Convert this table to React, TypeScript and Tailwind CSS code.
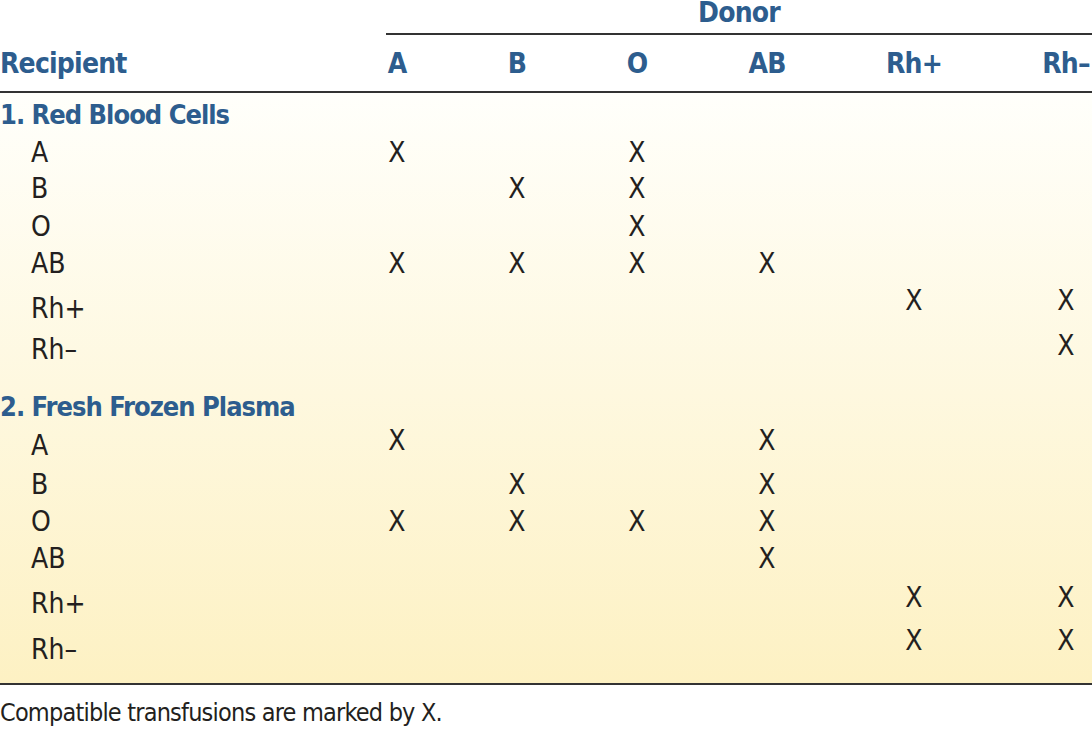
import React from 'react'

type Row = {
  label: string
  marks: number[]
  h: string
  lp: string
  xp: string
}

const cols = ['A', 'B', 'O', 'AB', 'Rh+', 'Rh–']

// row heights and padding picked to line labels / marks up with the printed table
const redCells: Row[] = [
  { label: 'A', marks: [1, 0, 1, 0, 0, 0], h: 'h-[37px]', lp: 'pt-[7px]', xp: 'pt-[7px]' },
  { label: 'B', marks: [0, 1, 1, 0, 0, 0], h: 'h-[37px]', lp: 'pt-[6px]', xp: 'pt-[6px]' },
  { label: 'O', marks: [0, 0, 1, 0, 0, 0], h: 'h-[37px]', lp: 'pt-[7px]', xp: 'pt-[7px]' },
  { label: 'AB', marks: [1, 1, 1, 1, 0, 0], h: 'h-[37px]', lp: 'pt-[7px]', xp: 'pt-[7px]' },
  { label: 'Rh+', marks: [0, 0, 0, 0, 1, 1], h: 'h-[45px]', lp: 'pt-[15px]', xp: 'pt-[7px]' },
  { label: 'Rh–', marks: [0, 0, 0, 0, 0, 1], h: 'h-[45px]', lp: 'pt-[11px]', xp: 'pt-[7px]' },
]

const plasma: Row[] = [
  { label: 'A', marks: [1, 0, 0, 1, 0, 0], h: 'h-[40px]', lp: 'pt-[9px]', xp: 'pt-[4px]' },
  { label: 'B', marks: [0, 1, 0, 1, 0, 0], h: 'h-[38px]', lp: 'pt-[8px]', xp: 'pt-[8px]' },
  { label: 'O', marks: [1, 1, 1, 1, 0, 0], h: 'h-[37px]', lp: 'pt-[7px]', xp: 'pt-[7px]' },
  { label: 'AB', marks: [0, 0, 0, 1, 0, 0], h: 'h-[38px]', lp: 'pt-[7px]', xp: 'pt-[7px]' },
  { label: 'Rh+', marks: [0, 0, 0, 0, 1, 1], h: 'h-[42px]', lp: 'pt-[14px]', xp: 'pt-[8px]' },
  { label: 'Rh–', marks: [0, 0, 0, 0, 1, 1], h: 'h-[63px]', lp: 'pt-[18px]', xp: 'pt-[9px]' },
]

const grid = 'grid grid-cols-[337px_120px_120px_120px_140px_154px_101px]'

const TableRow: React.FC<{ row: Row }> = ({ row }) => (
  <div className={`${grid} ${row.h} items-start text-[28px] leading-[24px]`}>
    <div className={`pl-[31px] ${row.lp}`}>{row.label}</div>
    {row.marks.map((m, i) => (
      <div key={i} className={`${row.xp} text-center ${i === 5 ? 'pl-[49px]' : ''}`}>
        {m ? 'X' : ''}
      </div>
    ))}
  </div>
)

const Section: React.FC<{ title: string; pad: string; h: string }> = ({ title, pad, h }) => (
  <div className={`${h} ${pad} text-[27px] leading-[32px] font-bold tracking-[-1px] text-[#2d5d8e]`}>
    {title}
  </div>
)

export default function App() {
  return (
    <div className="w-[1092px] h-[730px] bg-white text-[#231f20] font-['DejaVu_Sans_Condensed','DejaVu_Sans',sans-serif]">
      {/* Donor spanner */}
      <div className="ml-[386px] h-[35px] pt-[1px] border-b-2 border-[#333] text-center text-[28px] leading-[24px] font-bold tracking-[-0.8px] text-[#2d5d8e]">
        Donor
      </div>

      {/* Column heads */}
      <div className={`${grid} h-[58px] pt-[14px] border-b-2 border-[#333] text-[28px] leading-[30px] font-bold tracking-[-0.8px] text-[#2d5d8e]`}>
        <div>Recipient</div>
        {cols.map((c, i) => (
          <div key={c} className={`text-center ${i === 5 ? 'pl-[49px]' : ''}`}>
            {c}
          </div>
        ))}
      </div>

      {/* Body */}
      <div className="bg-gradient-to-b from-[#fffffb] to-[#fdf1c3] border-b-2 border-[#333]">
        <Section title="1. Red Blood Cells" pad="pt-[6px]" h="h-[41px]" />
        {redCells.map((r, i) => (
          <TableRow key={'r' + i} row={r} />
        ))}
        <Section title="2. Fresh Frozen Plasma" pad="pt-[19px]" h="h-[53px]" />
        {plasma.map((r, i) => (
          <TableRow key={'p' + i} row={r} />
        ))}
      </div>

      <p className="pt-[14px] text-[25px] leading-[28px] tracking-[-0.8px]">Compatible transfusions are marked by X.</p>
    </div>
  )
}
